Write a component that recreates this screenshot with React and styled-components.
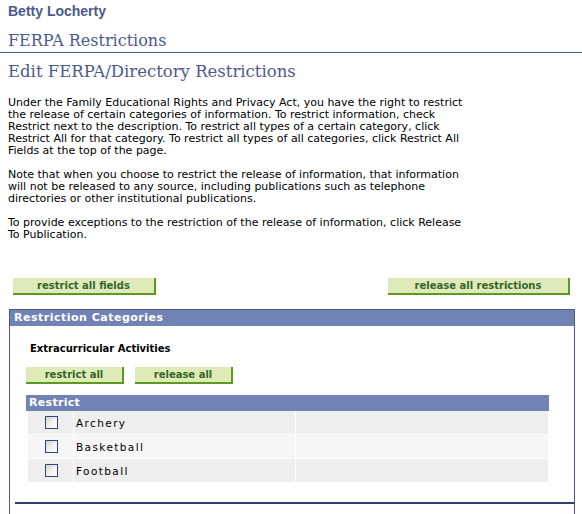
import React from 'react';
import styled, { createGlobalStyle } from 'styled-components';

const GlobalStyle = createGlobalStyle`
  body {
    margin: 0;
    background: #ffffff;
    font-family: "DejaVu Sans", Verdana, sans-serif;
  }
`;

const Page = styled.div`
  width: 582px;
  height: 514px;
  overflow: hidden;
  padding-top: 3px;
  box-sizing: border-box;
`;

const PersonName = styled.div`
  font-family: "Liberation Sans", Arial, sans-serif;
  font-weight: bold;
  font-size: 14px;
  line-height: 16px;
  color: #4b5a8c;
  padding-left: 8px;
`;

const PageTitle = styled.h1`
  margin: 12px 0 0;
  padding: 0 0 2px 8px;
  font-family: "DejaVu Serif", Georgia, serif;
  font-weight: normal;
  font-size: 16px;
  line-height: 19px;
  color: #4b5a8c;
  border-bottom: 1px solid #4b5a8c;
`;

const SubTitle = styled.h2`
  margin: 9px 0 0;
  padding-left: 8px;
  font-family: "DejaVu Serif", Georgia, serif;
  font-weight: normal;
  font-size: 16.5px;
  line-height: 20px;
  color: #4b5a8c;
`;

const Intro = styled.p`
  margin: ${p => (p.$first ? '15px' : '12px')} 0 0;
  padding-left: 8px;
  font-size: 11px;
  line-height: 12px;
  color: #000;
  white-space: nowrap;
`;

const ButtonBar = styled.div`
  display: flex;
  justify-content: space-between;
  margin: 37px 12px 0 13px;
`;

const GreenButton = styled.button`
  width: ${p => p.$width}px;
  height: 17px;
  padding: 0;
  background: #deeab7;
  border: none;
  border-right: 2px solid #5b9a1f;
  border-bottom: 2px solid #5b9a1f;
  color: #35662a;
  font-family: "DejaVu Sans", Verdana, sans-serif;
  font-weight: bold;
  font-size: 10px;
  line-height: 15px;
  text-align: center;
  cursor: pointer;
`;

const Panel = styled.section`
  margin: 14px 7px 0 9px;
  height: 210px;
  border: 1px solid #4b5a8c;
  border-bottom: none;
  box-sizing: border-box;
`;

const PanelHeader = styled.div`
  height: 16px;
  background: #7182b5;
  color: #ffffff;
  font-weight: bold;
  font-size: 11px;
  line-height: 16px;
  letter-spacing: 0.5px;
  padding-left: 4px;
`;

const GroupTitle = styled.div`
  margin: 17px 0 0 20px;
  font-weight: bold;
  font-size: 10px;
  line-height: 12px;
  color: #000;
`;

const GroupButtons = styled.div`
  display: flex;
  gap: 11px;
  margin: 12px 0 0 16px;
`;

const Grid = styled.div`
  margin: 11px 25px 0 16px;
`;

const GridHeader = styled.div`
  height: 16px;
  background: #7182b5;
  color: #ffffff;
  font-weight: bold;
  font-size: 11px;
  line-height: 16px;
  padding-left: 3px;
  letter-spacing: 0.3px;
`;

const GridRow = styled.div`
  display: grid;
  grid-template-columns: 45px 221px 1fr;
  column-gap: 1px;
  margin: 0 1px 1px 2px;
  height: 23px;
  background: #ffffff;
`;

const Cell = styled.div`
  background: ${p => (p.$alt ? '#f6f6f6' : '#eeeeee')};
  display: flex;
  align-items: center;
  justify-content: ${p => (p.$center ? 'center' : 'flex-start')};
  padding-left: ${p => (p.$center ? '0' : '2px')};
  font-size: 10.5px;
  letter-spacing: 1.4px;
  color: #000;
`;

const CheckBox = styled.span`
  display: block;
  width: 11px;
  height: 11px;
  margin-left: 1px;
  border: 1px solid #34466f;
  background: linear-gradient(135deg, #d4d4d4 0%, #f4f4f4 60%, #fbfbfb 100%);
`;

const BottomRule = styled.div`
  margin: 20px 0 0 5px;
  height: 2px;
  background: #2c3f6e;
`;

const activities = ['Archery', 'Basketball', 'Football'];

export default function App() {
  return (
    <Page>
      <GlobalStyle />
      <PersonName>Betty Locherty</PersonName>
      <PageTitle>FERPA Restrictions</PageTitle>
      <SubTitle>Edit FERPA/Directory Restrictions</SubTitle>
      <Intro $first>
        Under the Family Educational Rights and Privacy Act, you have the right to restrict<br />
        the release of certain categories of information. To restrict information, check<br />
        Restrict next to the description. To restrict all types of a certain category, click<br />
        Restrict All for that category. To restrict all types of all categories, click Restrict All<br />
        Fields at the top of the page.
      </Intro>
      <Intro>
        Note that when you choose to restrict the release of information, that information<br />
        will not be released to any source, including publications such as telephone<br />
        directories or other institutional publications.
      </Intro>
      <Intro>
        To provide exceptions to the restriction of the release of information, click Release<br />
        To Publication.
      </Intro>
      <ButtonBar>
        <GreenButton $width={143}>restrict all fields</GreenButton>
        <GreenButton $width={182}>release all restrictions</GreenButton>
      </ButtonBar>
      <Panel>
        <PanelHeader>Restriction Categories</PanelHeader>
        <GroupTitle>Extracurricular Activities</GroupTitle>
        <GroupButtons>
          <GreenButton $width={98}>restrict all</GreenButton>
          <GreenButton $width={98}>release all</GreenButton>
        </GroupButtons>
        <Grid>
          <GridHeader>Restrict</GridHeader>
          {activities.map((name, i) => (
            <GridRow key={name}>
              <Cell $center $alt={i % 2 === 1}><CheckBox /></Cell>
              <Cell $alt={i % 2 === 1}>{name}</Cell>
              <Cell $alt={i % 2 === 1} />
            </GridRow>
          ))}
        </Grid>
        <BottomRule />
      </Panel>
    </Page>
  );
}
